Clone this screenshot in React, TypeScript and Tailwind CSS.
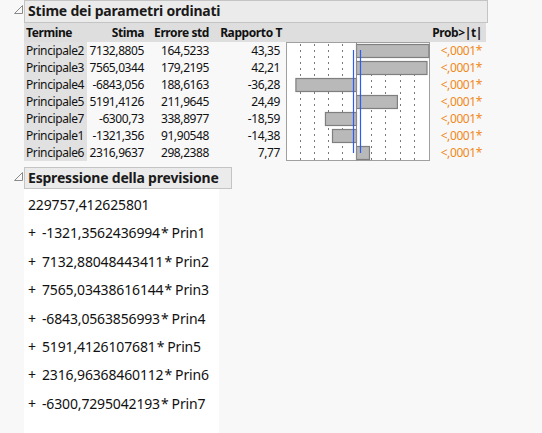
import React from "react";

const rows = [
  { term: "Principale2", est: "7132,8805", se: "164,5233", t: "43,35", tv: 43.35 },
  { term: "Principale3", est: "7565,0344", se: "179,2195", t: "42,21", tv: 42.21 },
  { term: "Principale4", est: "-6843,056", se: "188,6163", t: "-36,28", tv: -36.28 },
  { term: "Principale5", est: "5191,4126", se: "211,9645", t: "24,49", tv: 24.49 },
  { term: "Principale7", est: "-6300,73", se: "338,8977", t: "-18,59", tv: -18.59 },
  { term: "Principale1", est: "-1321,356", se: "91,90548", t: "-14,38", tv: -14.38 },
  { term: "Principale6", est: "2316,9637", se: "298,2388", t: "7,77", tv: 7.77 },
];

const terms = [
  ["-1321,3562436994", "Prin1"],
  ["7132,88048443411", "Prin2"],
  ["7565,03438616144", "Prin3"],
  ["-6843,0563856993", "Prin4"],
  ["5191,4126107681", "Prin5"],
  ["2316,96368460112", "Prin6"],
  ["-6300,7295042193", "Prin7"],
];

const Disclosure = () => (
  <svg width="9" height="9" viewBox="0 0 9 9" className="absolute left-[-10px] top-[5px]">
    <path d="M0.5 8.5 L8.5 8.5 L8.5 0.5 Z" fill="none" stroke="#8a8a8a" strokeWidth="1" />
  </svg>
);

const OutlineHeader = ({ title, className }: { title: string; className: string }) => (
  <div className={`relative ${className}`}>
    <Disclosure />
    <div className="h-full border border-[#c4c4c4] bg-[#ebebeb] pl-[3px] text-[14px] font-bold leading-[20px] tracking-[-0.2px] text-[#1a1a1a]">
      {title}
    </div>
  </div>
);

// bar chart of t ratios, one bar per row
const TChart = () => {
  const zero = 70;
  const scale = 1.67;
  const ticks = [14, 28, 42, 56, 85, 99, 114, 128];
  return (
    <svg width="144" height="119" className="block">
      <rect x="0.5" y="0.5" width="143" height="118" fill="#ffffff" stroke="#a0a0a0" />
      {ticks.map((x) => (
        <line key={x} x1={x + 0.5} y1="2" x2={x + 0.5} y2="118" stroke="#7a7a7a" strokeDasharray="2 4" />
      ))}
      {rows.map((r, i) => {
        const w = Math.abs(r.tv) * scale;
        const x = r.tv >= 0 ? zero : zero - w;
        return (
          <rect
            key={r.term}
            x={x + 0.5}
            y={i * 17 + 2.5}
            width={w}
            height={13}
            fill="#b9b9b9"
            stroke="#7f7f7f"
            strokeWidth="1.2"
          />
        );
      })}
      <line x1={zero + 0.5} y1="0.5" x2={zero + 0.5} y2="118.5" stroke="#8a8a8a" />
      <line x1="67.5" y1="8" x2="67.5" y2="111" stroke="#2f5cf0" strokeWidth="1.2" />
      <line x1="74.5" y1="8" x2="74.5" y2="111" stroke="#2f5cf0" strokeWidth="1.2" />
    </svg>
  );
};

export default function App() {
  return (
    <div className="h-[433px] w-[542px] overflow-hidden bg-[#f8f8f8] pl-[24px] font-['Noto_Sans',sans-serif] text-[12px] text-[#111]">
      <OutlineHeader title="Stime dei parametri ordinati" className="h-[23px] w-[464px]" />

      <div className="grid w-[462px] grid-cols-[63px_60px_65px_74px_144px_56px] grid-rows-[19px_repeat(7,17px)] leading-[17px] tracking-[-0.4px]">
        <div className="bg-[#dedede] pl-[2px] font-bold leading-[19px]">Termine</div>
        <div className="bg-[#dedede] pr-[3px] text-right font-bold leading-[19px]">Stima</div>
        <div className="bg-[#dedede] pr-[3px] text-right font-bold leading-[19px]">Errore std</div>
        <div className="bg-[#dedede] pr-[4px] text-right font-bold leading-[19px]">Rapporto T</div>
        <div className="bg-[#dedede]" />
        <div className="bg-[#dedede] pr-[4px] text-right font-bold leading-[19px]">Prob&gt;|t|</div>

        {rows.map((r, i) => (
          <React.Fragment key={r.term}>
            <div className="bg-[#e1e1e1] pl-[2px]">{r.term}</div>
            <div className="pr-[3px] text-right">{r.est}</div>
            <div className="pr-[3px] text-right">{r.se}</div>
            <div className="pr-[6px] text-right">{r.t}</div>
            {i === 0 && (
              <div className="row-span-7">
                <TChart />
              </div>
            )}
            <div className="pr-[4px] text-right text-[#f0891a]">&lt;,0001*</div>
          </React.Fragment>
        ))}
      </div>

      <OutlineHeader title="Espressione della previsione" className="mt-[6px] h-[22px] w-[208px]" />

      <div className="h-[250px] w-[195px] bg-white pl-[4px] pt-[2px] text-[14px] tracking-[-0.15px] text-[#111]">
        <div className="h-[28.4px] leading-[28.4px]">229757,412625801</div>
        {terms.map(([coef, name]) => (
          <div key={name} className="flex h-[28.4px] leading-[28.4px]">
            <span className="w-[14px]">+</span>
            <span>{coef}</span>
            <span className="ml-[1px]">*</span>
            <span className="ml-[3px]">{name}</span>
          </div>
        ))}
      </div>
    </div>
  );
}
